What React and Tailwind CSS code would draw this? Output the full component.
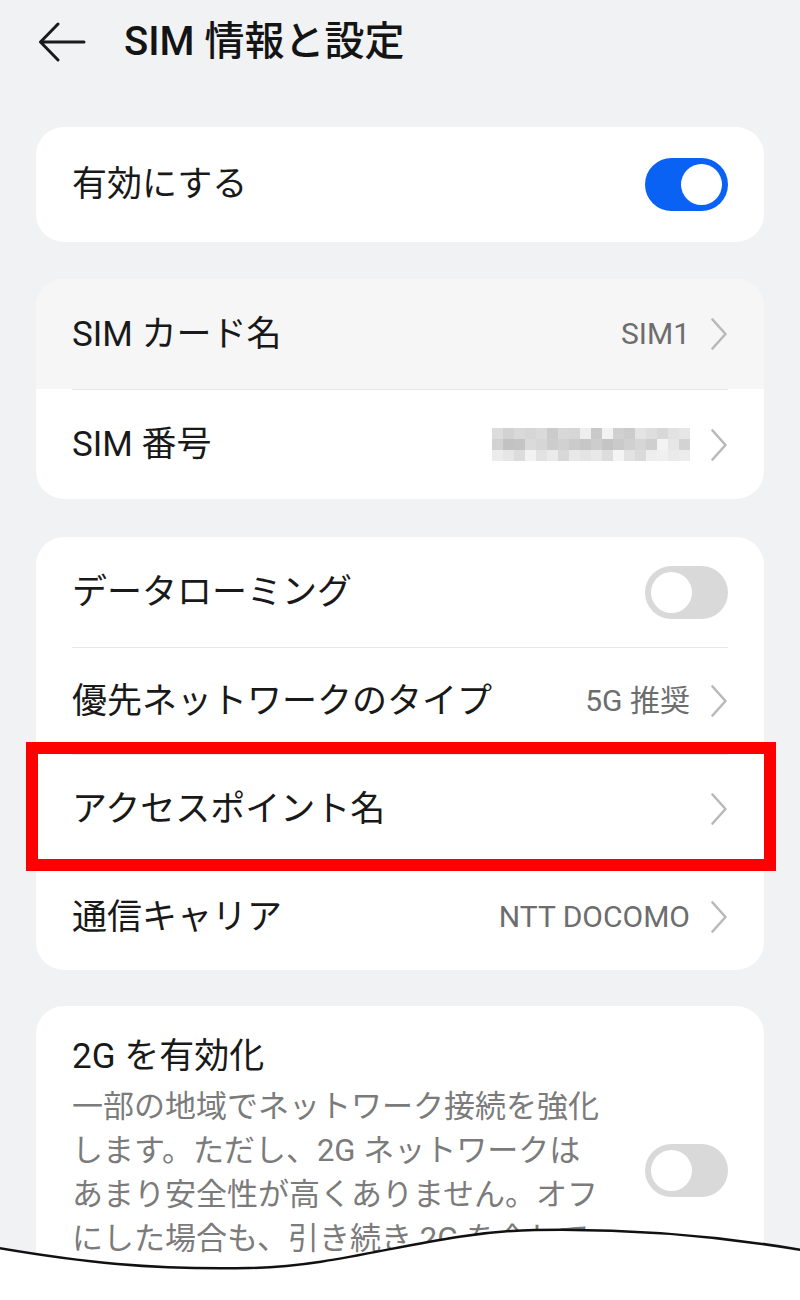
import React from 'react';

const font = { fontFamily: 'Roboto, "Noto Sans CJK JP", sans-serif' };

const Chevron = () => (
  <svg width="18" height="32" viewBox="0 0 18 32" fill="none" className="shrink-0">
    <path d="M2.5 1.5 L15.5 16 L2.5 30.5" stroke="#b9b9b9" strokeWidth="2.6" strokeLinecap="round" strokeLinejoin="round" />
  </svg>
);

const Toggle = ({ on }) => (
  <div
    className={`w-[83px] h-[53px] rounded-full flex items-center px-[6px] shrink-0 ${
      on ? 'bg-[#0a62f5] justify-end' : 'bg-[#d9d9d9] justify-start'
    }`}
  >
    <div className="w-[41px] h-[41px] rounded-full bg-white" />
  </div>
);

const Divider = () => <div className="mx-9 h-px bg-[#e7e7e7]" />;

// pixelated (mosaic) SIM number
const mosaic = [
  ['#dcdcdc', '#d2d2d2', '#d9d9d9', '#d6d6d6', '#dadada', '#cbcbcb', '#d8d8d8', '#d6d6d6', '#eeeeee', '#c9c9c9', '#f2f2f2', '#d0d0d0', '#cccccc', '#e4e4e4', '#dedede', '#d8d8d8', '#e2e2e2', '#e6e6e6'],
  ['#d2d2d2', '#c2c2c2', '#c4c4c4', '#dadada', '#d6d6d6', '#cdcdcd', '#d1d1d1', '#cbcbcb', '#c6c6c6', '#cdcdcd', '#c4c4c4', '#cacaca', '#d0d0d0', '#d6d6d6', '#cfcfcf', '#f3f3f3', '#e6e6e6', '#d3d3d3'],
  ['#ececec', '#e6e6e6', '#dcdcdc', '#f2f2f2', '#e2e2e2', '#eaeaea', '#d8d8d8', '#e8e8e8', '#e4e4e4', '#e8e8e8', '#dddddd', '#f4f4f4', '#e2e2e2', '#dadada', '#eeeeee', '#f0f0f0', '#eaeaea', '#ececec'],
];

const Mosaic = () => (
  <svg width="198" height="33" viewBox="0 0 198 33">
    {mosaic.map((row, r) =>
      row.map((c, i) => <rect key={`${r}-${i}`} x={i * 11} y={r * 11} width="11" height="11" fill={c} />)
    )}
  </svg>
);

const Row = ({ label, value, children, h = 'h-[108px]', bg = '' }) => (
  <div className={`flex items-center justify-between px-9 ${h} ${bg}`}>
    <span className="text-[35px] text-[#191919] leading-none">{label}</span>
    <div className="flex items-center gap-[20px]">
      {value && <span className="text-[30px] text-[#6d6d6d] leading-none">{value}</span>}
      {children}
    </div>
  </div>
);

export default function App() {
  return (
    <div className="relative w-[800px] h-[1300px] overflow-hidden bg-[#f1f2f4]" style={font}>
      {/* Header */}
      <div className="h-[84px] flex items-center pl-[38px] gap-[38px]">
        <svg width="48" height="40" viewBox="0 0 48 40" fill="none">
          <path d="M46 20 H3 M20 2 L2.5 20 L20 38" stroke="#1a1a1a" strokeWidth="3" strokeLinecap="round" strokeLinejoin="round" />
        </svg>
        <h1 className="text-[40px] font-medium text-[#141414] leading-none">SIM 情報と設定</h1>
      </div>

      <div className="mt-[43px] px-9 flex flex-col">
        {/* Card 1 */}
        <div className="bg-white rounded-[28px] h-[115px] flex items-center justify-between px-9">
          <span className="text-[35px] text-[#191919] leading-none">有効にする</span>
          <Toggle on />
        </div>

        {/* Card 2 */}
        <div className="mt-[37px] bg-white rounded-[28px] overflow-hidden">
          <Row label="SIM カード名" value="SIM1" h="h-[110px]" bg="bg-[#f6f6f6]">
            <Chevron />
          </Row>
          <Divider />
          <Row label="SIM 番号" h="h-[109px]">
            <Mosaic />
            <Chevron />
          </Row>
        </div>

        {/* Card 3 */}
        <div className="mt-[38px] bg-white rounded-[28px] overflow-hidden">
          <Row label="データローミング" h="h-[110px]">
            <Toggle />
          </Row>
          <Divider />
          <Row label="優先ネットワークのタイプ" value="5G 推奨" h="h-[106px]">
            <Chevron />
          </Row>
          <Divider />
          <Row label="アクセスポイント名" h="h-[108px]">
            <Chevron />
          </Row>
          <Divider />
          <Row label="通信キャリア" value="NTT DOCOMO" h="h-[106px]">
            <Chevron />
          </Row>
        </div>

        {/* Card 4 */}
        <div className="mt-[36px] bg-white rounded-[28px] px-9 pt-[29px] pb-8 flex items-center justify-between gap-6">
          <div className="flex flex-col">
            <span className="text-[35px] text-[#191919] leading-[44px]">2G を有効化</span>
            <p className="text-[31px] text-[#7b7b7b] leading-[44px] mt-[6px]">
              一部の地域でネットワーク接続を強化
              <br />
              します。ただし、2G ネットワークは
              <br />
              あまり安全性が高くありません。オフ
              <br />
              にした場合も、引き続き 2G を介して
              <br />
              緊急通報を発信できます。
            </p>
          </div>
          <Toggle />
        </div>
      </div>

      {/* highlight box */}
      <div className="absolute left-[26px] top-[742px] w-[750px] h-[129px] border-[12px] border-[#ff0000]" />

      {/* torn-off bottom */}
      <svg className="absolute left-0 top-[1220px]" width="800" height="80" viewBox="0 0 800 80">
        <path
          d="M-2 28 C80 42 150 50 250 48 C350 46 430 12 535 10 C640 8 730 18 802 30 L802 82 L-2 82 Z"
          fill="#ffffff"
          stroke="#111111"
          strokeWidth="2.5"
        />
      </svg>
    </div>
  );
}
